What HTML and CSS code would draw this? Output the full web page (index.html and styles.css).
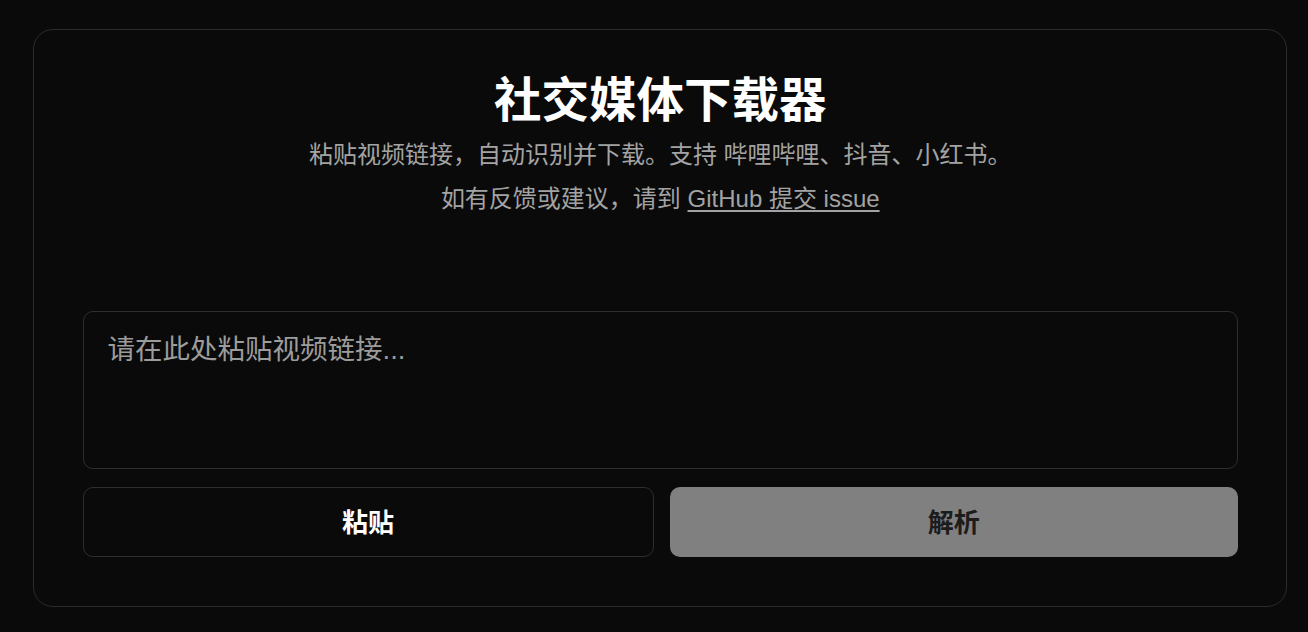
FILE: index.html
```html
<!DOCTYPE html>
<html lang="zh-CN">
<head>
<meta charset="utf-8">
<title>社交媒体下载器</title>
<link rel="stylesheet" href="styles.css">
</head>
<body>
<main class="page">
  <section class="card">
    <header class="head">
      <h1 class="title">社交媒体下载器</h1>
      <p class="sub">粘贴视频链接，自动识别并下载。支持 哔哩哔哩、抖音、小红书。</p>
      <p class="sub sub2">如有反馈或建议，请到 <a class="link" href="#">GitHub 提交 issue</a></p>
    </header>
    <textarea class="input" placeholder="请在此处粘贴视频链接..."></textarea>
    <div class="actions">
      <button class="btn btn-outline" type="button">粘贴</button>
      <button class="btn btn-solid" type="button">解析</button>
    </div>
  </section>
</main>
</body>
</html>
```
FILE: styles.css
```css
* { box-sizing: border-box; }
html, body {
  margin: 0;
  padding: 0;
  background: #0a0a0a;
  height: 100%;
  overflow: hidden;
}
body {
  font-family: "Liberation Sans", "Noto Sans CJK SC", sans-serif;
  color: #ffffff;
}
.page {
  padding: 29px 21px 0 33px;
}
.card {
  border: 1.5px solid #2b2b2b;
  border-radius: 20px;
  padding: 43px 48px 49px 48.5px;
  display: flex;
  flex-direction: column;
}
.head {
  text-align: center;
}
.title {
  margin: 0;
  font-size: 47.5px;
  line-height: 56px;
  font-weight: 700;
  color: #ffffff;
}
.sub {
  margin: 8px 0 0;
  font-size: 24px;
  line-height: 35px;
  color: #a3a3a3;
}
.sub2 {
  margin-top: 9px;
}
.link {
  color: #a3a3a3;
  text-decoration: underline;
  text-underline-offset: 3px;
}
.input {
  display: block;
  margin-top: 95px;
  width: 100%;
  height: 158px;
  resize: none;
  background: transparent;
  border: 1.5px solid #2e2e2e;
  border-radius: 10px;
  padding: 18px 24px;
  font-family: "Liberation Sans", "Noto Sans CJK SC", sans-serif;
  font-size: 27.5px;
  line-height: 40px;
  color: #ffffff;
  outline: none;
}
.input::placeholder {
  color: #9c9c9c;
}
.actions {
  margin-top: 18px;
  display: grid;
  grid-template-columns: 571fr 568fr;
  gap: 16px;
}
.btn {
  height: 70px;
  border-radius: 10px;
  font-family: "Liberation Sans", "Noto Sans CJK SC", sans-serif;
  font-size: 26px;
  font-weight: 600;
  padding: 0 0 4px;
  cursor: pointer;
}
.btn-outline {
  background: transparent;
  border: 1.5px solid #2e2e2e;
  color: #ffffff;
}
.btn-solid {
  background: #808080;
  border: none;
  color: #1c1c1c;
}
```
